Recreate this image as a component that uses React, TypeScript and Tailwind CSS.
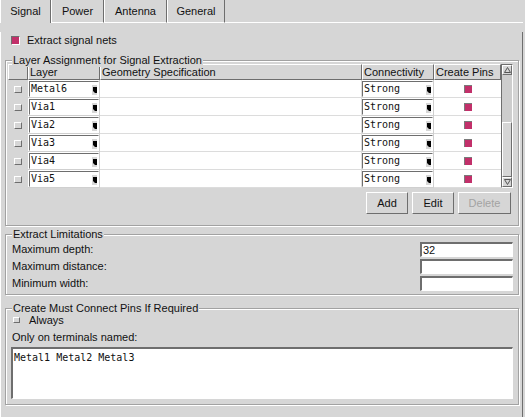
import React from "react";

const raised = "border border-t-white border-l-white border-r-[#6e6e6e] border-b-[#6e6e6e]";
const sunken = "border border-t-[#6e6e6e] border-l-[#6e6e6e] border-r-white border-b-white";
const mono = "font-['DejaVu_Sans_Mono',monospace] text-[10px]";

interface ComboProps {
    value: string
}

function ComboArrow() {
    return (
        <svg width="6" height="11" viewBox="0 0 6 11" className="shrink-0">
            <rect x="0" y="0" width="6" height="11" fill="#d6d6d6" />
            <rect x="0" y="0" width="1" height="11" fill="#ffffff" />
            <rect x="0" y="0" width="6" height="1" fill="#ffffff" />
            <path d="M2 3h4v6h-2l-2-2z" fill="#000000" />
        </svg>
    )
}

function Combo({ value }: ComboProps) {
    return (
        <div className={`flex items-center h-full bg-white pl-[1px] pr-[1px] ${sunken}`}>
            <span className={`flex-1 ${mono} leading-none text-[#111]`}>{value}</span>
            <ComboArrow />
        </div>
    )
}

function PinBox() {
    return (
        <div className="w-[8px] h-[8px] bg-[#c2306a] border-t border-l border-[#7a7a7a]" />
    )
}

function Group({ label, className, children }: { label: string, className?: string, children: React.ReactNode }) {
    return (
        <div className={`relative border border-[#a2a2a2] shadow-[inset_1px_1px_0_#ffffff,1px_1px_0_#ffffff] ${className ?? ""}`}>
            <span className="absolute -top-[8px] left-[6px] bg-[#d6d6d6] px-[1px] leading-[14px]">{label}</span>
            {children}
        </div>
    )
}

const layers = ["Metal6", "Via1", "Via2", "Via3", "Via4", "Via5"];

function Tab({ title, width, active }: { title: string, width: string, active?: boolean }) {
    return (
        <div className={`${width} flex items-center justify-center border-l border-l-white border-r border-r-[#6e6e6e] ${active ? "" : "border-b border-b-white"}`}>
            {title}
        </div>
    )
}

export default function App() {
    return (
        <div className="w-[525px] h-[417px] bg-[#d6d6d6] text-[#111] text-[11px] font-['Liberation_Sans',Arial,sans-serif] overflow-hidden">
            {/* tabs */}
            <div className="flex h-[23px] w-[523px]">
                <Tab title="Signal" width="w-[51px]" active />
                <Tab title="Power" width="w-[53px]" />
                <Tab title="Antenna" width="w-[63px]" />
                <Tab title="General" width="w-[58px]" />
                <div className="flex-1 border-b border-b-white" />
            </div>

            <div className="w-[523px] h-[388px] border-l border-l-white border-r border-r-[#6e6e6e] border-b border-b-[#6e6e6e] pl-[4px] pr-[3px]">
                <div className="flex items-center h-[16px] mt-[9px] pl-[6px] gap-[7px]">
                    <div className="w-[9px] h-[9px] bg-[#c2306a] border-t border-l border-[#6e6e6e] border-r border-b border-r-white border-b-white" />
                    <span>Extract signal nets</span>
                </div>

                {/* layer assignment */}
                <Group label="Layer Assignment for Signal Extraction" className="mt-[12px] pl-[2px] pr-[5px] pt-[3px] pb-[11px]">
                    <div className="flex">
                        <div className="w-[493px]">
                            <div className="flex h-[16px]">
                                <div className={`w-[20px] ${raised}`} />
                                <div className={`w-[72px] ${raised} pl-[1px] leading-[14px]`}>Layer</div>
                                <div className={`w-[262px] ${raised} pl-[1px] leading-[14px]`}>Geometry Specification</div>
                                <div className={`w-[72px] ${raised} pl-[1px] leading-[14px]`}>Connectivity</div>
                                <div className={`w-[67px] ${raised} pl-[1px] leading-[14px]`}>Create Pins</div>
                            </div>
                            {layers.map((layer) => (
                                <div key={layer} className="flex h-[18px]">
                                    <div className="w-[20px] flex items-center justify-center">
                                        <div className={`w-[8px] h-[7px] ${raised}`} />
                                    </div>
                                    <div className="w-[72px] bg-white border-r border-b border-[#cfcfcf] pl-[1px] pt-[1px]">
                                        <Combo value={layer} />
                                    </div>
                                    <div className="w-[262px] bg-white border-r border-b border-[#dcdcdc]" />
                                    <div className="w-[72px] bg-white border-r border-b border-[#cfcfcf] pt-[1px]">
                                        <Combo value="Strong" />
                                    </div>
                                    <div className="w-[67px] bg-white border-b border-[#dcdcdc] flex items-center justify-center">
                                        <PinBox />
                                    </div>
                                </div>
                            ))}
                        </div>
                        {/* scrollbar */}
                        <div className={`w-[12px] h-[124px] flex flex-col bg-[#cdcdcd] ${sunken}`}>
                            <div className={`h-[10px] bg-[#d6d6d6] flex items-center justify-center ${raised}`}>
                                <svg width="7" height="6" viewBox="0 0 7 6"><path d="M3.5 0.5L6.5 5.5H0.5z" fill="none" stroke="#555" strokeWidth="1" /></svg>
                            </div>
                            <div className="flex-1 flex flex-col justify-end">
                                <div className={`h-[55px] bg-[#d6d6d6] ${raised}`} />
                            </div>
                            <div className={`h-[10px] bg-[#d6d6d6] flex items-center justify-center ${raised}`}>
                                <svg width="7" height="6" viewBox="0 0 7 6"><path d="M3.5 5.5L6.5 0.5H0.5z" fill="none" stroke="#555" strokeWidth="1" /></svg>
                            </div>
                        </div>
                    </div>
                    <div className="flex justify-end gap-[4px] mt-[4px] pr-[2px]">
                        <button className={`w-[42px] h-[22px] bg-[#d6d6d6] ${raised}`}>Add</button>
                        <button className={`w-[42px] h-[22px] bg-[#d6d6d6] ${raised}`}>Edit</button>
                        <button className={`w-[53px] h-[22px] bg-[#d6d6d6] text-[#a3a3a3] ${raised}`}>Delete</button>
                    </div>
                </Group>

                {/* limitations */}
                <Group label="Extract Limitations" className="mt-[8px] pl-[6px] pr-[5px] pt-[7px] pb-[3px]">
                    <div className="flex flex-col gap-[2px]">
                        {[["Maximum depth:", "32"], ["Maximum distance:", ""], ["Minimum width:", ""]].map(([label, val]) => (
                            <div key={label} className="flex items-center justify-between h-[15px]">
                                <span>{label}</span>
                                <div className={`w-[93px] h-[15px] bg-white pl-[1px] flex items-center ${sunken} border-t-2 border-l-2`}>
                                    <span className="leading-none">{val}</span>
                                </div>
                            </div>
                        ))}
                    </div>
                </Group>

                {/* must connect pins */}
                <Group label="Create Must Connect Pins If Required" className="mt-[13px] pl-[5px] pr-[5px] pt-[4px] pb-[5px]">
                    <div className="flex items-center h-[14px] pl-[2px] gap-[9px]">
                        <div className={`w-[7px] h-[6px] ${raised}`} />
                        <span>Always</span>
                    </div>
                    <div className="h-[12px] mt-[4px] pl-[1px] leading-[12px]">Only on terminals named:</div>
                    <div className={`h-[52px] mt-[4px] bg-white pl-[1px] pt-[2px] leading-[12px] ${sunken} border-t-2 border-l-2`}>
                        <span className={mono}>Metal1 Metal2 Metal3</span>
                    </div>
                </Group>
            </div>
        </div>
    )
}
